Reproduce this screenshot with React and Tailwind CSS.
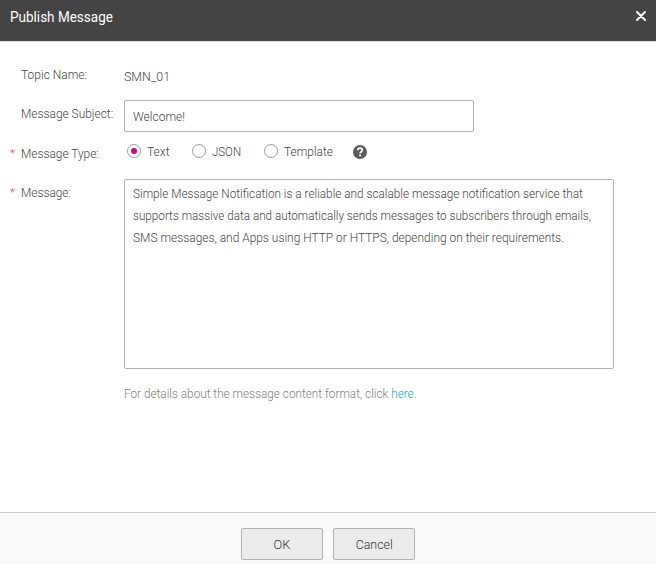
import React from "react";

function Label({ children, required, scale, className = "" }) {
  return (
    <div className={`flex w-[124px] shrink-0 whitespace-nowrap pl-[10px] leading-5 ${className}`}>
      <span className="w-[11px] shrink-0 text-[11.5px] text-[#f03030]">{required ? "*" : ""}</span>
      <span className={`inline-block origin-left ${scale}`}>{children}</span>
    </div>
  );
}

function Radio({ checked, label, scale, className }) {
  return (
    <label className={`flex h-5 shrink-0 items-center whitespace-nowrap ${className}`}>
      <span className="mr-[6px] flex h-[14px] w-[14px] shrink-0 items-center justify-center rounded-full border border-[#a0a0a0] bg-white">
        {checked && <span className="h-[6px] w-[6px] rounded-full bg-[#e20074]" />}
      </span>
      <span className={`inline-block origin-left leading-5 ${scale}`}>{label}</span>
    </label>
  );
}

export default function App() {
  return (
    <div className="flex h-[564px] w-[656px] flex-col overflow-hidden bg-white font-['Roboto','Liberation_Sans',sans-serif] text-[13.5px] font-light text-[#444]">
      <header className="flex h-[42px] shrink-0 items-start justify-between border-b border-[#e4e4e4] bg-[#444] bg-clip-padding pl-[10px] pr-[10px] pt-[7px] text-white">
        <h1 className="origin-left scale-x-[.965] whitespace-nowrap text-[14px] font-normal leading-5">Publish Message</h1>
        <svg className="mt-[4px] h-[10px] w-[10px]" viewBox="0 0 10 10" fill="none" stroke="currentColor" strokeWidth="2" strokeLinecap="round">
          <path d="M1 1l8 8M9 1L1 9" />
        </svg>
      </header>

      <main className="flex grow flex-col">
        <div className="flex h-[58px] items-start pt-[22px]">
          <Label scale="scale-x-[.888]">Topic Name:</Label>
          <span className="mt-[2px] inline-block origin-left scale-x-[.92] leading-5">SMN_01</span>
        </div>
        <div className="flex h-[32px] items-start">
          <Label scale="scale-x-[.882]" className="pt-[3px]">Message Subject:</Label>
          <div className="flex h-[32px] w-[350px] items-center rounded-[2px] border border-[#b2b2b2] pl-[8px]">
            <span className="inline-block origin-left scale-x-[.89] leading-5">Welcome!</span>
          </div>
        </div>
        <div className="flex h-[47px] items-start pt-[9px]">
          <Label required scale="scale-x-[.88]" className="pt-[2px]">Message Type:</Label>
          <div className="flex items-center pl-[3px]">
            <Radio checked label="Text" scale="scale-x-[.89]" className="w-[65px]" />
            <Radio label="JSON" scale="scale-x-[.85]" className="w-[72px]" />
            <Radio label="Template" scale="scale-x-[.884]" className="w-[89px]" />
            <svg className="mt-[1px] h-[14px] w-[14px]" viewBox="0 0 14 14" fill="none">
              <circle cx="7" cy="7" r="7" fill="#5c5c5c" />
              <path d="M4.7 5.2C4.8 3.8 5.7 3.1 7 3.1c1.4 0 2.3.8 2.3 1.9 0 1.7-2.2 1.6-2.2 3.3" stroke="#fff" strokeWidth="1.8" />
              <path d="M6.1 9.4h1.9v1.8H6.1z" fill="#fff" />
            </svg>
          </div>
        </div>
        <div className="flex h-[190px] items-start">
          <Label required scale="scale-x-[.878]" className="pt-[3px]">Message:</Label>
          <div className="h-[190px] w-[490px] whitespace-nowrap rounded-[2px] border border-[#b2b2b2] pl-[8px] pt-[2px] leading-[22px]">
            <p className="origin-left scale-x-[.873]">Simple Message Notification is a reliable and scalable message notification service that</p>
            <p className="origin-left scale-x-[.8665]">supports massive data and automatically sends messages to subscribers through emails,</p>
            <p className="origin-left scale-x-[.884]">SMS messages, and Apps using HTTP or HTTPS, depending on their requirements.</p>
          </div>
        </div>
        <p className="ml-[124px] mt-[14px] origin-left scale-x-[.872] whitespace-nowrap leading-5 text-[#808080]">
          For details about the message content format, click <a className="text-[#1ba0e8]">here.</a>
        </p>
      </main>

      <footer className="flex h-[52px] shrink-0 justify-center gap-[10px] border-t border-[#ccc] bg-[#fafafa] pt-[15px] text-[#333]">
        <button className="h-[32px] w-[82px] rounded-[2px] border border-[#b2b2b2] bg-[#ececec]">
          <span className="inline-block scale-x-[.95] leading-5">OK</span>
        </button>
        <button className="h-[32px] w-[82px] rounded-[2px] border border-[#b2b2b2] bg-[#ececec]">
          <span className="inline-block scale-x-[.915] leading-5">Cancel</span>
        </button>
      </footer>
    </div>
  );
}
